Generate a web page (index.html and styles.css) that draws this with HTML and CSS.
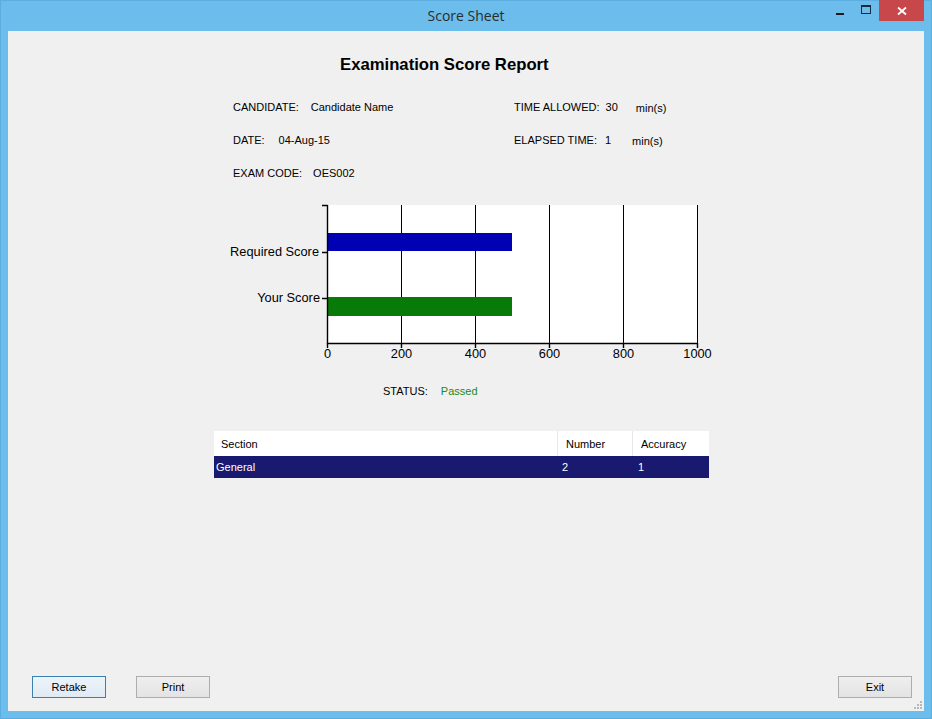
FILE: index.html
```html
<!DOCTYPE html>
<html>
<head>
<meta charset="utf-8">
<link rel="stylesheet" href="styles.css">
</head>
<body>
<div class="window">
  <div class="titlebar">
    <div class="title">Score Sheet</div>
    <div class="controls">
      <div class="ctl min"><span class="min-bar"></span></div>
      <div class="ctl max"><span class="max-box"></span></div>
      <div class="ctl close">
        <svg width="12" height="10" viewBox="0 0 12 10"><path d="M2 1.5 L10 8.5 M10 1.5 L2 8.5" stroke="#fff" stroke-width="1.8" fill="none"/></svg>
      </div>
    </div>
  </div>
  <div class="client">
    <h1 class="heading">Examination Score Report</h1>
    <div class="info">
      <div class="item"><span>CANDIDATE:</span><span class="v g12">Candidate Name</span></div>
      <div class="item"><span>TIME ALLOWED:</span><span class="v g6">30</span><span class="v g18 unit">min(s)</span></div>
      <div class="item"><span>DATE:</span><span class="v g14">04-Aug-15</span></div>
      <div class="item"><span>ELAPSED TIME:</span><span class="v g8">1</span><span class="v g21 unit">min(s)</span></div>
      <div class="item"><span>EXAM CODE:</span><span class="v g11">OES002</span></div>
    </div>
    <svg class="chart" width="500" height="165" viewBox="0 0 500 165">
      <rect x="105" y="5" width="370" height="138" fill="#fff"/>
      <g stroke="#000" stroke-width="1" fill="none">
        <path d="M179.5 5 V143 M253.5 5 V143 M327.5 5 V143 M401.5 5 V143 M475.5 5 V143"/>
      </g>
      <rect x="105" y="33" width="185" height="18" fill="#0000b4"/>
      <rect x="105" y="97" width="185" height="19" fill="#077a07"/>
      <g stroke="#000" stroke-width="1.4" fill="none">
        <path d="M105.5 5 V143.5 H475.5"/>
        <path d="M100 5.5 H105.5 M100 52.5 H105.5 M100 98.5 H105.5"/>
        <path d="M105.5 143 V148 M179.5 143 V148 M253.5 143 V148 M327.5 143 V148 M401.5 143 V148 M475.5 143 V148"/>
      </g>
      <g class="lbl" text-anchor="end">
        <text x="97" y="56">Required Score</text>
        <text x="98" y="102">Your Score</text>
      </g>
      <g class="lbl" text-anchor="middle">
        <text x="105.5" y="158">0</text>
        <text x="179.5" y="158">200</text>
        <text x="253.5" y="158">400</text>
        <text x="327.5" y="158">600</text>
        <text x="401.5" y="158">800</text>
        <text x="475.5" y="158">1000</text>
      </g>
    </svg>
    <div class="status"><span>STATUS:</span><span class="passed">Passed</span></div>
    <div class="grid">
      <div class="row head">
        <div class="c c1">Section</div>
        <div class="c c2">Number</div>
        <div class="c c3">Accuracy</div>
      </div>
      <div class="row sel">
        <div class="c c1">General</div>
        <div class="c c2">2</div>
        <div class="c c3">1</div>
      </div>
    </div>
    <div class="spacer"></div>
    <div class="buttons">
      <button class="btn focus">Retake</button>
      <button class="btn print">Print</button>
      <button class="btn exit">Exit</button>
    </div>
    <div class="grip">
      <svg width="10" height="10" viewBox="0 0 10 10" fill="#b8b8b8">
        <rect x="7" y="1" width="2" height="2"/>
        <rect x="4" y="4" width="2" height="2"/><rect x="7" y="4" width="2" height="2"/>
        <rect x="1" y="7" width="2" height="2"/><rect x="4" y="7" width="2" height="2"/><rect x="7" y="7" width="2" height="2"/>
      </svg>
    </div>
  </div>
</div>
</body>
</html>
```
FILE: styles.css
```css
* { box-sizing: border-box; }
html, body { margin: 0; padding: 0; }
body {
  width: 932px;
  height: 719px;
  overflow: hidden;
  background: #6cbdec;
  font-family: "Liberation Sans", Arial, sans-serif;
  font-size: 11px;
  color: #000;
}
.window {
  width: 932px;
  height: 719px;
  display: flex;
  flex-direction: column;
  background: #6cbdec;
  border: 1px solid #5aaee0;
}
.titlebar {
  height: 30px;
  position: relative;
  display: flex;
  align-items: center;
  justify-content: center;
}
.title {
  font-family: "Open Sans", "Noto Sans", sans-serif;
  font-size: 14px;
  color: #2b2b2b;
  margin-top: -1px;
}
.controls {
  position: absolute;
  top: -1px;
  right: 7px;
  display: flex;
  align-items: flex-start;
}
.ctl {
  height: 21px;
  display: flex;
  align-items: center;
  justify-content: center;
}
.min { width: 26px; }
.min-bar { display: block; width: 8px; height: 2px; background: #1a1a1a; margin-top: 6px; }
.max { width: 26px; }
.max-box {
  display: block;
  width: 10px;
  height: 9px;
  border: 1px solid #1a2a3a;
  border-top-width: 2px;
  margin-top: -3px;
}
.close {
  width: 45px;
  background: #c7474b;
}
.client {
  flex: 1;
  margin: 0 7px 7px 7px;
  background: #f0f0f0;
  display: flex;
  flex-direction: column;
  position: relative;
}
.heading {
  margin: 24px 0 0 332px;
  font-size: 16.7px;
  line-height: 20px;
  font-weight: bold;
  width: 212px;
  white-space: nowrap;
}
.info {
  margin: 25px 0 0 225px;
  display: grid;
  grid-template-columns: 281px auto;
  row-gap: 19px;
  line-height: 14px;
  height: 80px;
}
.item { display: flex; white-space: nowrap; }
.v { display: inline-block; }
.g6 { margin-left: 6px; }
.g8 { margin-left: 8px; }
.g11 { margin-left: 11px; }
.g12 { margin-left: 12px; }
.g14 { margin-left: 14px; }
.g18 { margin-left: 18px; }
.g21 { margin-left: 21px; }
.unit { position: relative; top: 1px; }
.chart {
  display: block;
  margin: 20px 0 0 214px;
}
.lbl text {
  font-family: "Liberation Sans", Arial, sans-serif;
  font-size: 12.8px;
  fill: #000;
}
.status {
  margin: 19px 0 0 375px;
  line-height: 14px;
  display: flex;
}
.passed { margin-left: 13px; color: #1b8a1b; }
.grid {
  margin: 33px 0 0 206px;
  width: 495px;
}
.row { display: flex; }
.head { height: 25px; background: #fff; }
.sel { height: 22px; background: #191970; color: #fff; }
.c { display: flex; align-items: center; }
.head .c1 { width: 344px; padding-left: 7px; border-right: 1px solid #e8e8e8; }
.head .c2 { width: 75px; padding-left: 8px; border-right: 1px solid #e8e8e8; }
.head .c3 { width: 76px; padding-left: 8px; }
.sel .c1 { width: 344px; padding-left: 2px; }
.sel .c2 { width: 75px; padding-left: 4px; }
.sel .c3 { width: 76px; padding-left: 5px; }
.spacer { flex: 1; }
.buttons {
  display: flex;
  padding: 0 12px 13px 24px;
}
.btn {
  width: 74px;
  height: 22px;
  font-family: "Liberation Sans", Arial, sans-serif;
  font-size: 11px;
  color: #000;
  background: linear-gradient(#efefef, #e3e3e3);
  border: 1px solid #adadad;
  padding: 0;
  margin: 0;
}
.btn.focus { border-color: #3c7fb1; background: linear-gradient(#ecf4fb, #e1e9f2); }
.print { margin-left: 30px; }
.exit { margin-left: auto; }
.grip {
  position: absolute;
  right: 1px;
  bottom: 1px;
  width: 10px;
  height: 10px;
}
.grip svg { display: block; }
```
